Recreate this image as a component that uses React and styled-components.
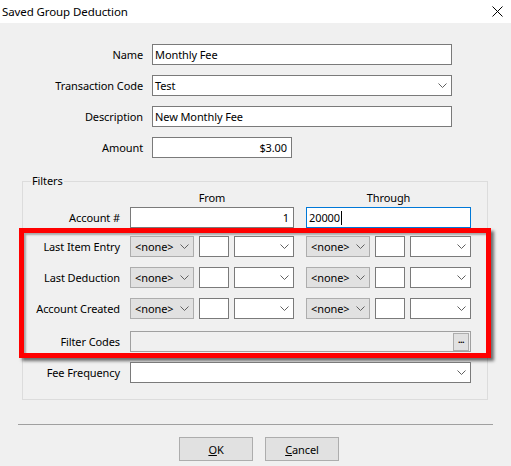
import React from 'react';
import styled, { createGlobalStyle } from 'styled-components';

const GlobalStyle = createGlobalStyle`
  html, body {
    margin: 0;
    padding: 0;
    background: #f0f0f0;
  }
  body {
    font-family: 'Noto Sans', 'Liberation Sans', sans-serif;
    font-size: 11px;
    letter-spacing: -0.1px;
    color: #000;
  }
`;

const Window = styled.div`
  width: 511px;
  height: 466px;
  background: #f0f0f0;
  overflow: hidden;
  display: flex;
  flex-direction: column;
`;

const TitleBar = styled.div`
  height: 23px;
  flex: none;
  box-sizing: border-box;
  background: #fff;
  display: flex;
  align-items: center;
  justify-content: space-between;
  padding: 0 8px 0 2px;
  font-size: 11.5px;
`;

const MainForm = styled.div`
  display: grid;
  grid-template-columns: 143px 300px;
  grid-auto-rows: 21px;
  column-gap: 9px;
  row-gap: 10px;
  align-items: center;
  margin-top: 21px;
`;

const FieldLabel = styled.span`
  text-align: right;
  white-space: nowrap;
`;

const TextBox = styled.div`
  box-sizing: border-box;
  height: 21px;
  width: ${({ $width }) => ($width ? `${$width}px` : 'auto')};
  border: 1px solid ${({ $focused }) => ($focused ? '#0078d7' : '#7a7a7a')};
  background: #fff;
  padding: 0 ${({ $align }) => ($align === 'right' ? '4px' : '2px')};
  line-height: 19px;
  text-align: ${({ $align }) => $align || 'left'};
  white-space: nowrap;
  overflow: hidden;
`;

const Caret = styled.span`
  display: inline-block;
  width: 1px;
  height: 14px;
  margin-left: 1px;
  background: #000;
  vertical-align: -3px;
`;

const Select = styled.div`
  box-sizing: border-box;
  height: 21px;
  display: flex;
  align-items: center;
  justify-content: space-between;
  border: 1px solid ${({ $flat }) => ($flat ? '#adadad' : '#7a7a7a')};
  background: ${({ $flat }) => ($flat ? '#e1e1e1' : '#fff')};
  padding: 0 4px 0 ${({ $flat }) => ($flat ? '4px' : '2px')};
  white-space: nowrap;
  overflow: hidden;
  width: ${({ $width }) => ($width ? `${$width}px` : 'auto')};
  flex: ${({ $width }) => ($width ? 'none' : '1')};
`;

const Group = styled.fieldset`
  margin: 16px 0 0 22px;
  width: 466px;
  min-width: 0;
  box-sizing: border-box;
  border: 1px solid #dcdcdc;
  padding: 0 0 16px 0;
`;

const Legend = styled.legend`
  margin-left: 8px;
  padding: 0 1px;
  line-height: 14px;
`;

const FilterRow = styled.div`
  display: grid;
  grid-template-columns: ${({ $labelWidth }) => $labelWidth}px 164px 165px;
  column-gap: 12px;
  height: ${({ $height }) => $height || 21}px;
  align-items: center;
  margin-top: ${({ $gap }) => $gap || 0}px;
`;

const RowLabel = styled.span`
  text-align: right;
  margin-right: -2px;
  white-space: nowrap;
`;

const ColumnHead = styled.span`
  text-align: center;
`;

const Highlight = styled.div`
  margin: 0 -4px;
  border: 5px solid #ff0000;
  padding: 3px 0 1px;
  box-shadow: 3px 3px 3px rgba(0, 0, 0, 0.55), inset 2px 2px 2px rgba(0, 0, 0, 0.3);
`;

const DateCell = styled.div`
  display: flex;
  gap: 5px;
  min-width: 0;
`;

const SmallBox = styled.div`
  box-sizing: border-box;
  width: 30px;
  height: 21px;
  flex: none;
  border: 1px solid #7a7a7a;
  background: #fff;
`;

const WideCell = styled.div`
  grid-column: 2 / 4;
`;

const CodesBox = styled.div`
  box-sizing: border-box;
  height: 21px;
  border: 1px solid #a0a0a0;
  background: #f0f0f0;
  display: flex;
  align-items: center;
  justify-content: flex-end;
  padding-right: 1px;
`;

const EllipsisButton = styled.div`
  box-sizing: border-box;
  width: 16px;
  height: 18px;
  border: 1px solid #adadad;
  background: #e1e1e1;
  font-size: 9px;
  font-weight: bold;
  line-height: 11px;
  text-align: center;
  letter-spacing: -0.5px;
`;

const Separator = styled.div`
  height: 1px;
  background: #a0a0a0;
  margin: 24px 18px 0 18px;
`;

const ButtonBar = styled.div`
  display: flex;
  gap: 12px;
  margin-top: 12px;
  padding-left: 179px;
`;

const Button = styled.div`
  box-sizing: border-box;
  width: 74px;
  height: 24px;
  border: 1px solid #adadad;
  background: #e1e1e1;
  display: flex;
  align-items: center;
  justify-content: center;
`;

const Chevron = () => (
  <svg width="9" height="5" viewBox="0 0 9 5" style={{ flex: 'none' }}>
    <path d="M0.5 0.5 L4.5 4.5 L8.5 0.5" fill="none" stroke="#606060" strokeWidth="1" />
  </svg>
);

const CloseIcon = () => (
  <svg width="11" height="11" viewBox="0 0 11 11">
    <path d="M0.5 0.5 L10.5 10.5 M10.5 0.5 L0.5 10.5" fill="none" stroke="#000" strokeWidth="1" />
  </svg>
);

const DateRange = () => (
  <DateCell>
    <Select $flat $width={64}>
      &lt;none&gt;
      <Chevron />
    </Select>
    <SmallBox />
    <Select>
      <span />
      <Chevron />
    </Select>
  </DateCell>
);

const dateFilters = [
  { label: 'Last Item Entry', gap: 0 },
  { label: 'Last Deduction', gap: 10 },
  { label: 'Account Created', gap: 10 },
];

const App = () => (
  <>
    <GlobalStyle />
    <Window>
      <TitleBar>
        <span>Saved Group Deduction</span>
        <CloseIcon />
      </TitleBar>

      <MainForm>
        <FieldLabel>Name</FieldLabel>
        <TextBox>Monthly Fee</TextBox>
        <FieldLabel>Transaction Code</FieldLabel>
        <Select>
          Test
          <Chevron />
        </Select>
        <FieldLabel>Description</FieldLabel>
        <TextBox>New Monthly Fee</TextBox>
        <FieldLabel>Amount</FieldLabel>
        <TextBox $width={140} $align="right">$3.00</TextBox>
      </MainForm>

      <Group>
        <Legend>Filters</Legend>
        <FilterRow $labelWidth={95} $height={16} $gap={1}>
          <span />
          <ColumnHead>From</ColumnHead>
          <ColumnHead>Through</ColumnHead>
        </FilterRow>
        <FilterRow $labelWidth={95} $gap={2}>
          <RowLabel>Account #</RowLabel>
          <TextBox $align="right">1</TextBox>
          <TextBox $focused>
            20000
            <Caret />
          </TextBox>
        </FilterRow>

        <Highlight>
          {dateFilters.map((f) => (
            <FilterRow key={f.label} $labelWidth={94} $gap={f.gap}>
              <RowLabel>{f.label}</RowLabel>
              <DateRange />
              <DateRange />
            </FilterRow>
          ))}
          <FilterRow $labelWidth={94} $gap={12}>
            <RowLabel>Filter Codes</RowLabel>
            <WideCell>
              <CodesBox>
                <EllipsisButton>...</EllipsisButton>
              </CodesBox>
            </WideCell>
          </FilterRow>
        </Highlight>

        <FilterRow $labelWidth={95} $gap={4}>
          <RowLabel>Fee Frequency</RowLabel>
          <WideCell>
            <Select>
              <span />
              <Chevron />
            </Select>
          </WideCell>
        </FilterRow>
      </Group>

      <Separator />

      <ButtonBar>
        <Button>
          <span><u>O</u>K</span>
        </Button>
        <Button>
          <span><u>C</u>ancel</span>
        </Button>
      </ButtonBar>
    </Window>
  </>
);

export default App;
